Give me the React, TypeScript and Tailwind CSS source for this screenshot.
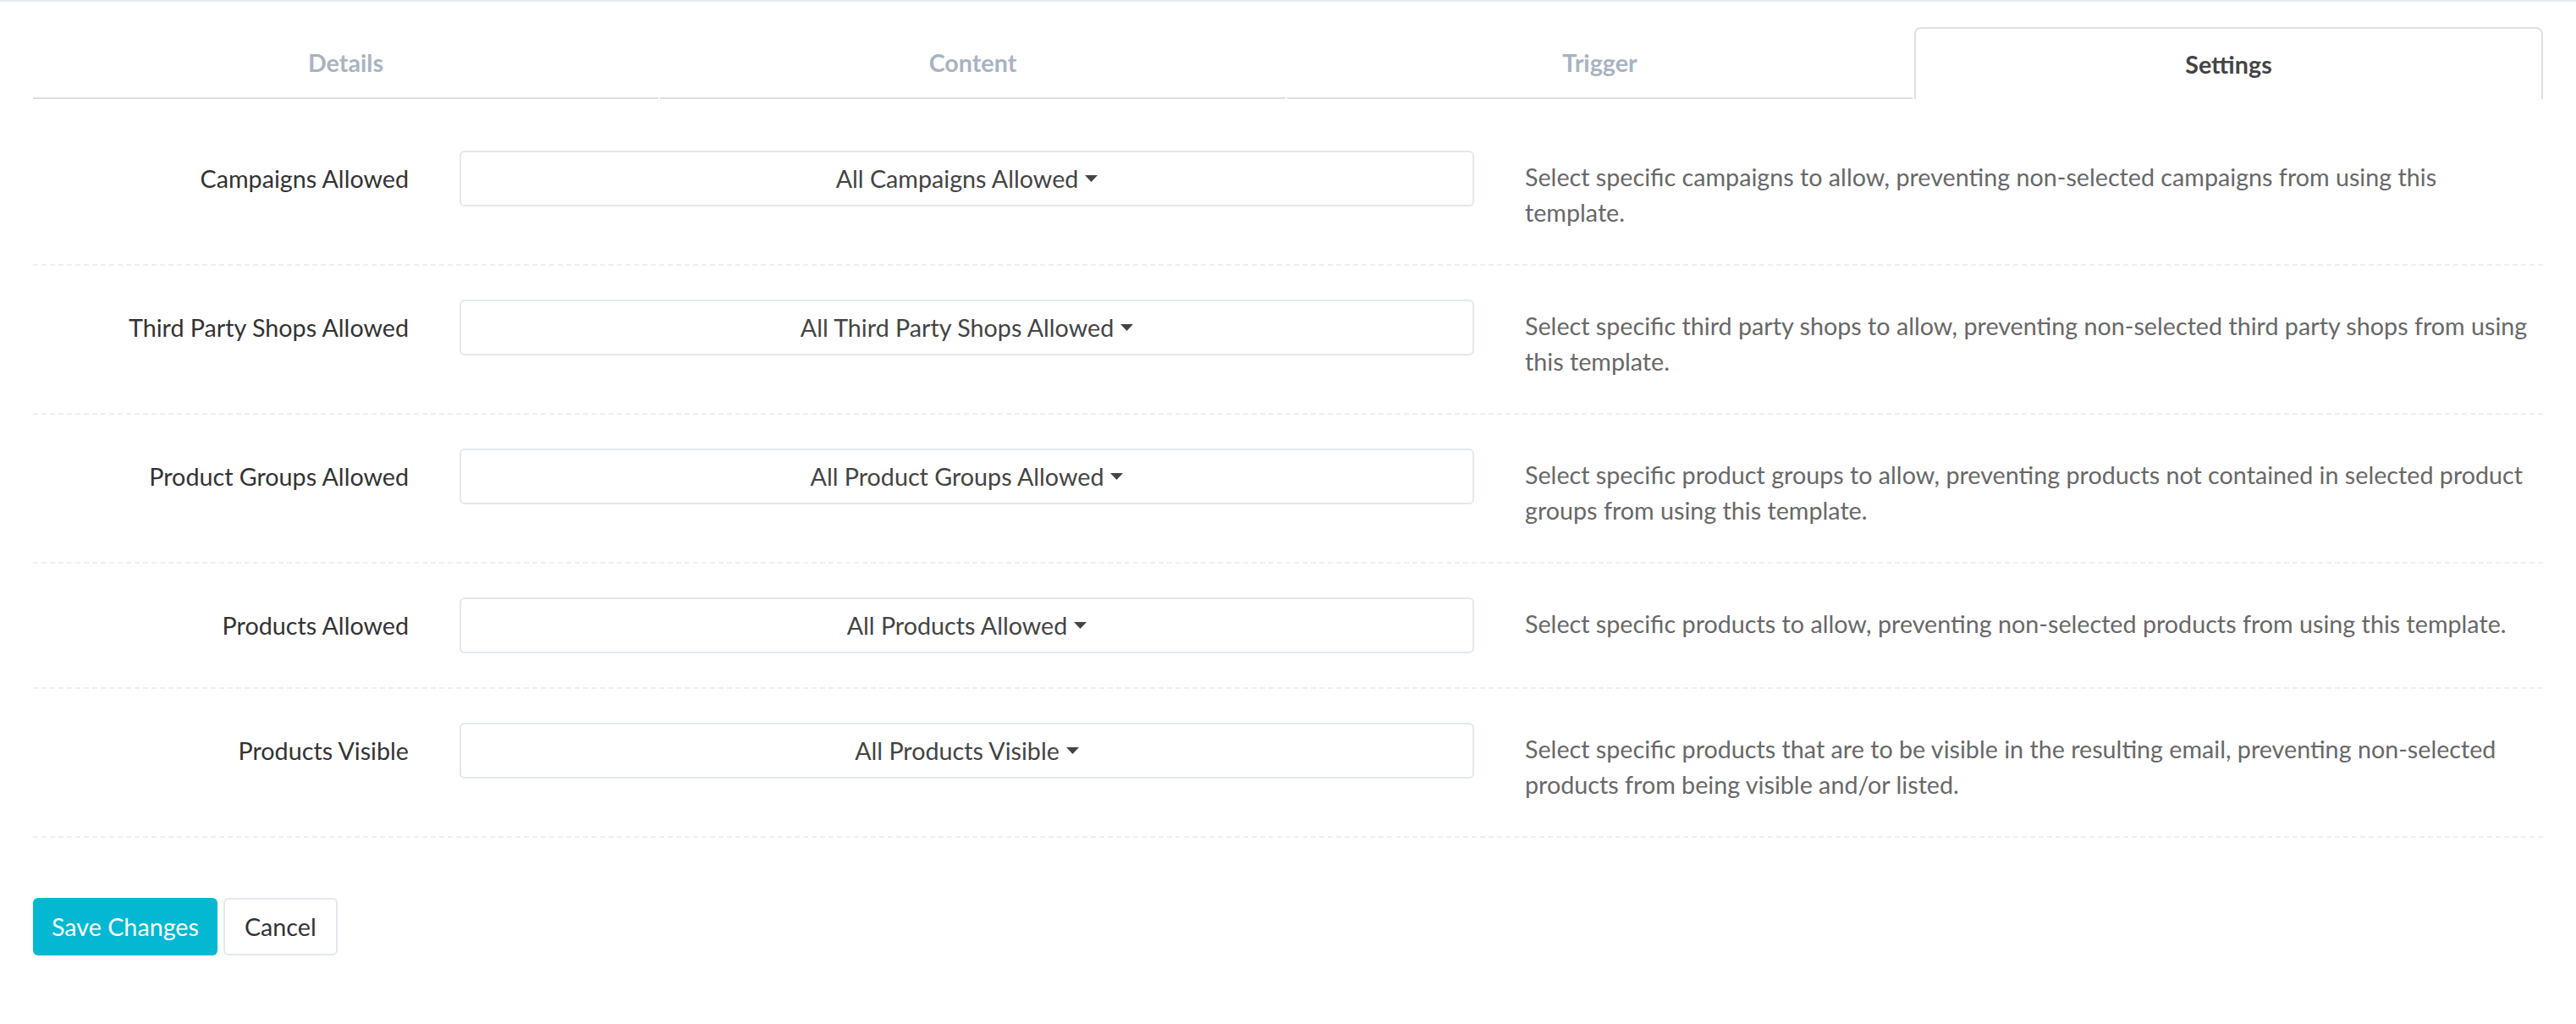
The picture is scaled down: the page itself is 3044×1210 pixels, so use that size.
import React from "react";

const tabs = ["Details", "Content", "Trigger", "Settings"];

const rows = [
  {
    label: "Campaigns Allowed",
    value: "All Campaigns Allowed",
    help: "Select specific campaigns to allow, preventing non-selected campaigns from using this template.",
  },
  {
    label: "Third Party Shops Allowed",
    value: "All Third Party Shops Allowed",
    help: "Select specific third party shops to allow, preventing non-selected third party shops from using this template.",
  },
  {
    label: "Product Groups Allowed",
    value: "All Product Groups Allowed",
    help: "Select specific product groups to allow, preventing products not contained in selected product groups from using this template.",
  },
  {
    label: "Products Allowed",
    value: "All Products Allowed",
    help: "Select specific products to allow, preventing non-selected products from using this template.",
  },
  {
    label: "Products Visible",
    value: "All Products Visible",
    help: "Select specific products that are to be visible in the resulting email, preventing non-selected products from being visible and/or listed.",
  },
];

const App = () => {
  return (
    <div className="min-h-[1210px] bg-white border-t-2 border-[#e6eaed] font-['Lato','Liberation_Sans',sans-serif] text-[28.7px] leading-[42px] text-[#333]">
      <div className="px-[39px] pt-[30px]">
        {/* TABS */}
        <div className="flex gap-[2px]">
          {tabs.map((tab) => {
            const active = tab === "Settings";
            return (
              <div
                key={tab}
                className={
                  active
                    ? "flex-1 h-[85px] flex items-center justify-center font-bold text-[#444] border-2 border-b-0 border-[#e0e0e0] rounded-t-[8px] bg-white"
                    : "flex-1 h-[85px] flex items-center justify-center font-bold text-[#a9b3c1] border-b-2 border-[#dedede]"
                }
              >
                {tab}
              </div>
            );
          })}
        </div>

        {/* FORM */}
        <div className="mt-[21px]">
          {rows.map((row) => (
            <div
              key={row.label}
              className="grid grid-cols-[444px_1199px_1fr] gap-x-[60px] py-[40px] border-b-2 border-dashed border-[#eceff2]"
            >
              <div className="h-[66px] flex items-center justify-end text-[#333]">
                {row.label}
              </div>
              <div>
                <button className="w-full h-[66px] flex items-center justify-center gap-[8px] border-2 border-[#e3e8ec] rounded-[6px] bg-white text-[#444]">
                  <span>{row.value}</span>
                  <svg width="15" height="8" viewBox="0 0 15 8">
                    <path d="M0 0 L15 0 L7.5 8 Z" fill="#444" />
                  </svg>
                </button>
              </div>
              <div className="pt-[10px] text-[#686868] pr-[7px]">{row.help}</div>
            </div>
          ))}
        </div>

        {/* ACTIONS */}
        <div className="flex gap-[7px] mt-[71px]">
          <button className="h-[68px] px-[22px] rounded-[6px] bg-[#04b8d3] text-white">
            Save Changes
          </button>
          <button className="h-[68px] px-[23px] rounded-[6px] border-2 border-[#e3e8ee] bg-white text-[#333]">
            Cancel
          </button>
        </div>
      </div>
    </div>
  );
};

export default App;
